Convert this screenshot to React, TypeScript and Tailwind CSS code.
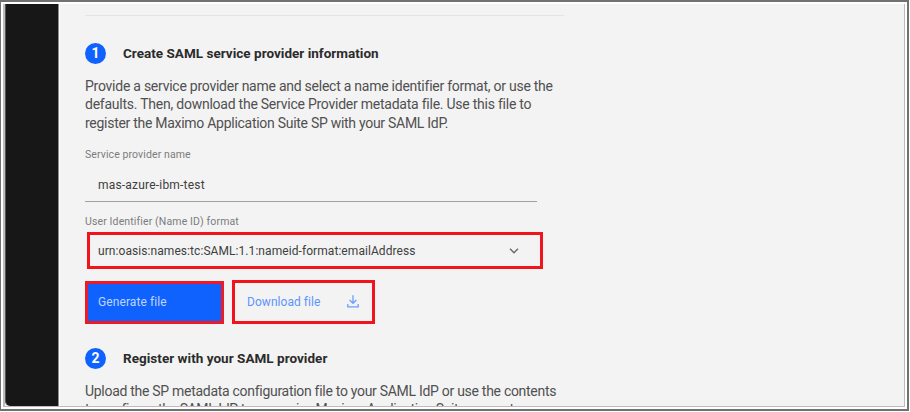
import React from "react";

function StepHeading({ step, title, tracking }: { step: string; title: string; tracking: string }) {
  return (
    <div className="flex h-[22px] items-center">
      <span className="flex size-[21px] items-center justify-center rounded-full bg-[#0f62fe] text-[14px] font-bold text-white">
        {step}
      </span>
      <h2 className={`ml-[17px] text-[13.5px] font-bold text-[#2b2b2b] ${tracking}`}>{title}</h2>
    </div>
  );
}

function DownloadIcon() {
  return (
    <svg width="12" height="13" viewBox="0 0 12 13" fill="none" stroke="#6b9eff" strokeWidth="1.3">
      <path d="M6 .3v8M2.6 5 6 8.4 9.4 5M.8 9v2.9h10.4V9" />
    </svg>
  );
}

export default function App() {
  return (
    <div className="h-[412px] w-[910px] overflow-hidden bg-white pr-px pb-px font-['Roboto','Noto_Sans',sans-serif] whitespace-nowrap">
      <div className="h-[411px] w-[909px] border-2 border-l border-[#717171] bg-white p-[2px]">
        <div className="flex h-[403px] w-[902px] overflow-hidden border-r border-b border-l-2 border-[#bcbcbc] bg-[#f3f3f3]">
          <aside className="h-full w-[53px] shrink-0 rounded-bl-[5px] border-l border-[#555] bg-[#171717]" />
          <div className="h-full w-px shrink-0 bg-[#8c8c8c]" />
          <main className="h-full flex-1 overflow-hidden border-l border-white pl-[25px]">
            <div className="mt-[11px] h-px w-[479px] bg-[#e4e4e4]" />
            <div className="mt-[26px]">
              <StepHeading step="1" title="Create SAML service provider information" tracking="tracking-[0.02px]" />
            </div>
            <p className="mt-[13px] h-[55px] text-[14px] leading-[18.4px] text-[#505050]">
              <span className="block tracking-[-0.25px]">Provide a service provider name and select a name identifier format, or use the</span>
              <span className="block tracking-[-0.24px]">defaults. Then, download the Service Provider metadata file. Use this file to</span>
              <span className="block tracking-[-0.28px]">register the Maximo Application Suite SP with your SAML IdP.</span>
            </p>
            <label className="mt-[16px] block h-[14px] text-[10.5px] leading-[14px] tracking-[0.1px] text-[#7c7c7c]">Service provider name</label>
            <div className="mt-[6px] flex h-[34px] w-[452px] items-center border-b border-[#a0a0a0] pl-[13px] text-[12px] tracking-[0.2px] text-[#404040]">
              mas-azure-ibm-test
            </div>
            <label className="mt-[13px] block h-[14px] text-[10.5px] leading-[14px] tracking-[0.13px] text-[#7c7c7c]">User Identifier (Name ID) format</label>
            <div className="mt-[3px] ml-[2px] flex h-[37px] w-[456px] items-center border-3 border-[#f2141d] pl-[8px] text-[12px] tracking-[0.07px] text-[#404040]">
              <span>urn:oasis:names:tc:SAML:1.1:nameid-format:emailAddress</span>
              <svg className="mr-[21px] ml-auto" width="10" height="6" viewBox="0 0 10 6" fill="none" stroke="#666" strokeWidth="1.3">
                <path d="m1 .8 4 4 4-4" />
              </svg>
            </div>
            <div className="mt-[11px] flex items-end gap-[8px] text-[12px] tracking-[0.05px]">
              <button className="flex h-[43px] w-[139px] items-center border-3 border-[#ed1a27] bg-[#0f62fe] pb-[2px] pl-[10px] tracking-[0.1px] text-[#c0d5ff]">
                Generate file
              </button>
              <button className="flex h-[44px] w-[143px] items-center border-3 border-[#f2141d] pb-px pl-[12px] text-[#5b93ff]">
                <span>Download file</span>
                <span className="mr-[13px] ml-auto">
                  <DownloadIcon />
                </span>
              </button>
            </div>
            <div className="mt-[23px]">
              <StepHeading step="2" title="Register with your SAML provider" tracking="tracking-[0.03px]" />
            </div>
            <p className="mt-[13px] text-[14px] leading-[18.4px] text-[#505050]">
              <span className="block tracking-[-0.29px]">Upload the SP metadata configuration file to your SAML IdP or use the contents</span>
              <span className="block tracking-[-0.4px]">to configure the SAML IdP to recognize Maximo Application Suite support</span>
            </p>
          </main>
        </div>
      </div>
    </div>
  );
}
